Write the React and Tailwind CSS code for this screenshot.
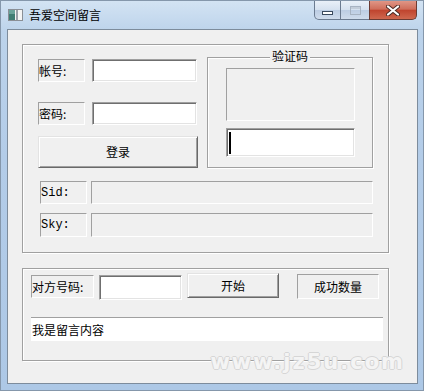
import React from 'react'

const cjk = { fontFamily: '"Noto Sans CJK SC", "Liberation Sans", sans-serif' }
const mono = { fontFamily: '"Liberation Mono", "Courier New", monospace' }

// classic 3D borders
const sunkenStatic = 'border border-t-[#a0a0a0] border-l-[#a0a0a0] border-b-white border-r-white'
const editBox =
  'bg-white border border-t-[#a0a0a0] border-l-[#a0a0a0] border-b-white border-r-white shadow-[inset_1px_1px_0_#6f6f6f,inset_-1px_-1px_0_#e3e3e3]'
const button =
  'bg-[#f0f0f0] border border-t-[#e3e3e3] border-l-[#e3e3e3] border-b-[#696969] border-r-[#696969] shadow-[inset_1px_1px_0_#ffffff,inset_-1px_-1px_0_#a0a0a0]'
const groupBox = 'border border-[#a0a0a0] shadow-[inset_1px_1px_0_#ffffff,1px_1px_0_#ffffff]'

const Label = ({ children, className = '' }) => (
  <div className={`${sunkenStatic} flex items-center text-[12px] leading-none text-black ${className}`} style={cjk}>
    {children}
  </div>
)

const TitleIcon = () => (
  <svg width="15" height="12" viewBox="0 0 15 12" className="shrink-0">
    <rect x="0.5" y="0.5" width="14" height="11" fill="#f4f4f4" stroke="#8a8f96" />
    <rect x="1" y="1" width="6" height="10" fill="#3f7d73" />
    <rect x="1" y="1" width="6" height="4" fill="#6aa39a" />
    <rect x="8" y="1" width="2" height="10" fill="#9aa0a8" />
  </svg>
)

const CaptionButtons = () => (
  <div className="flex self-start mr-[6px]">
    <div className="w-[27px] h-[19px] border border-[#6b7b90] border-t-0 rounded-bl-[5px] bg-[linear-gradient(180deg,#e9f0f8_0%,#d5e1ef_50%,#bccde3_51%,#cfdcec_100%)] flex items-end justify-center pb-[4px]">
      <div className="w-[11px] h-[4px] bg-white border border-[#3a4a5e]" />
    </div>
    <div className="w-[28px] h-[19px] border-b border-[#6b7b90] bg-[linear-gradient(180deg,#e9f0f8_0%,#d5e1ef_50%,#bccde3_51%,#cfdcec_100%)] flex items-center justify-center">
      <div className="w-[11px] h-[9px] border border-[#a7b3c2] shadow-[inset_0_2px_0_#c3cdd9]" />
    </div>
    <div className="w-[48px] h-[19px] border border-[#6b3b33] border-t-0 rounded-br-[5px] bg-[linear-gradient(180deg,#e09686_0%,#cf6e5b_45%,#c0452f_52%,#cf684f_100%)] flex items-center justify-center">
      <svg width="14" height="11" viewBox="0 0 14 11">
        <path d="M2 1.5 L12 9.5 M12 1.5 L2 9.5" stroke="#4a2a24" strokeWidth="4" strokeLinecap="round" />
        <path d="M2 1.5 L12 9.5 M12 1.5 L2 9.5" stroke="#ffffff" strokeWidth="2.2" strokeLinecap="round" />
      </svg>
    </div>
  </div>
)

export default function App() {
  return (
    <div className="relative w-[424px] h-[391px] overflow-hidden border border-[#8597ab] bg-[linear-gradient(180deg,#d3e3f3_0%,#bcd3eb_8%,#b3cce8_40%,#adc8e6_100%)]">
      {/* title bar */}
      <div className="flex items-start justify-between h-[28px]">
        <div className="flex items-center gap-[6px] pl-[7px] pt-[8px]">
          <TitleIcon />
          <span className="text-[12px] leading-none text-black" style={cjk}>
            吾爱空间留言
          </span>
        </div>
        <CaptionButtons />
      </div>

      {/* client area */}
      <div className="ml-[6px] w-[411px] h-[355px] border border-[#7d8c9c] bg-[#f0f0f0] flex flex-col">
        {/* top group */}
        <div className={`${groupBox} ml-[14px] mt-[14px] w-[367px] h-[209px] flex flex-col`}>
          <div className="flex items-start">
            <div className="ml-[15px] mt-[14px] w-[160px] flex flex-col">
              <div className="flex gap-[7px]">
                <Label className="w-[47px] h-[23px]">帐号:</Label>
                <div className={`${editBox} w-[105px] h-[23px]`} />
              </div>
              <div className="flex gap-[7px] mt-[20px]">
                <Label className="w-[47px] h-[23px]">密码:</Label>
                <div className={`${editBox} w-[105px] h-[23px]`} />
              </div>
              <button
                className={`${button} mt-[11px] w-[160px] h-[32px] text-[12px] leading-none text-black flex items-center justify-center`}
                style={cjk}
              >
                登录
              </button>
            </div>

            {/* captcha group */}
            <div className={`${groupBox} relative ml-[9px] mt-[12px] w-[166px] h-[111px] flex flex-col`}>
              <span
                className="absolute left-1/2 -translate-x-1/2 -top-[8px] px-[2px] bg-[#f0f0f0] text-[12px] leading-none text-black"
                style={cjk}
              >
                验证码
              </span>
              <div className={`${sunkenStatic} ml-[18px] mt-[10px] w-[129px] h-[53px]`} />
              <div className={`${editBox} ml-[18px] mt-[7px] w-[129px] h-[29px] flex items-center`}>
                <div className="ml-[2px] w-[2px] h-[22px] bg-black" />
              </div>
            </div>
          </div>

          <div className="flex gap-[4px] ml-[17px] mt-[13px]">
            <div className={`${sunkenStatic} w-[47px] h-[23px] flex items-center text-[12px] leading-none`} style={mono}>
              Sid:
            </div>
            <div className={`${sunkenStatic} w-[282px] h-[23px]`} />
          </div>
          <div className="flex gap-[4px] ml-[17px] mt-[9px]">
            <div className={`${sunkenStatic} w-[47px] h-[24px] flex items-center text-[12px] leading-none`} style={mono}>
              Sky:
            </div>
            <div className={`${sunkenStatic} w-[282px] h-[24px]`} />
          </div>
        </div>

        {/* bottom group */}
        <div className={`${groupBox} ml-[14px] mt-[15px] w-[367px] h-[93px] flex flex-col`}>
          <div className="flex items-start">
            <Label className="ml-[8px] mt-[6px] w-[63px] h-[23px]">对方号码:</Label>
            <div className={`${editBox} ml-[5px] mt-[6px] w-[83px] h-[25px]`} />
            <button
              className={`${button} ml-[5px] mt-[4px] w-[92px] h-[25px] text-[12px] leading-none text-black flex items-center justify-center`}
              style={cjk}
            >
              开始
            </button>
            <div
              className={`${sunkenStatic} ml-[18px] mt-[5px] w-[82px] h-[25px] flex items-center justify-center text-[12px] leading-none`}
              style={cjk}
            >
              成功数量
            </div>
          </div>
          <div
            className="ml-[8px] mt-[17px] w-[352px] h-[24px] bg-white border-t border-[#a0a0a0] flex items-center pl-[1px] text-[12px] leading-none text-black"
            style={cjk}
          >
            我是留言内容
          </div>
        </div>
      </div>

      {/* watermark */}
      <div
        className="absolute right-[18px] bottom-[17px] text-[21px] font-bold leading-none tracking-[2px] text-[#f4f4f4] [text-shadow:1px_0_0_#d6d6d6,-1px_0_0_#d6d6d6,0_1px_0_#d6d6d6,0_-1px_0_#d6d6d6] pointer-events-none"
        style={{ fontFamily: '"DejaVu Sans", sans-serif' }}
      >
        www.jz5u.com
      </div>
    </div>
  )
}
